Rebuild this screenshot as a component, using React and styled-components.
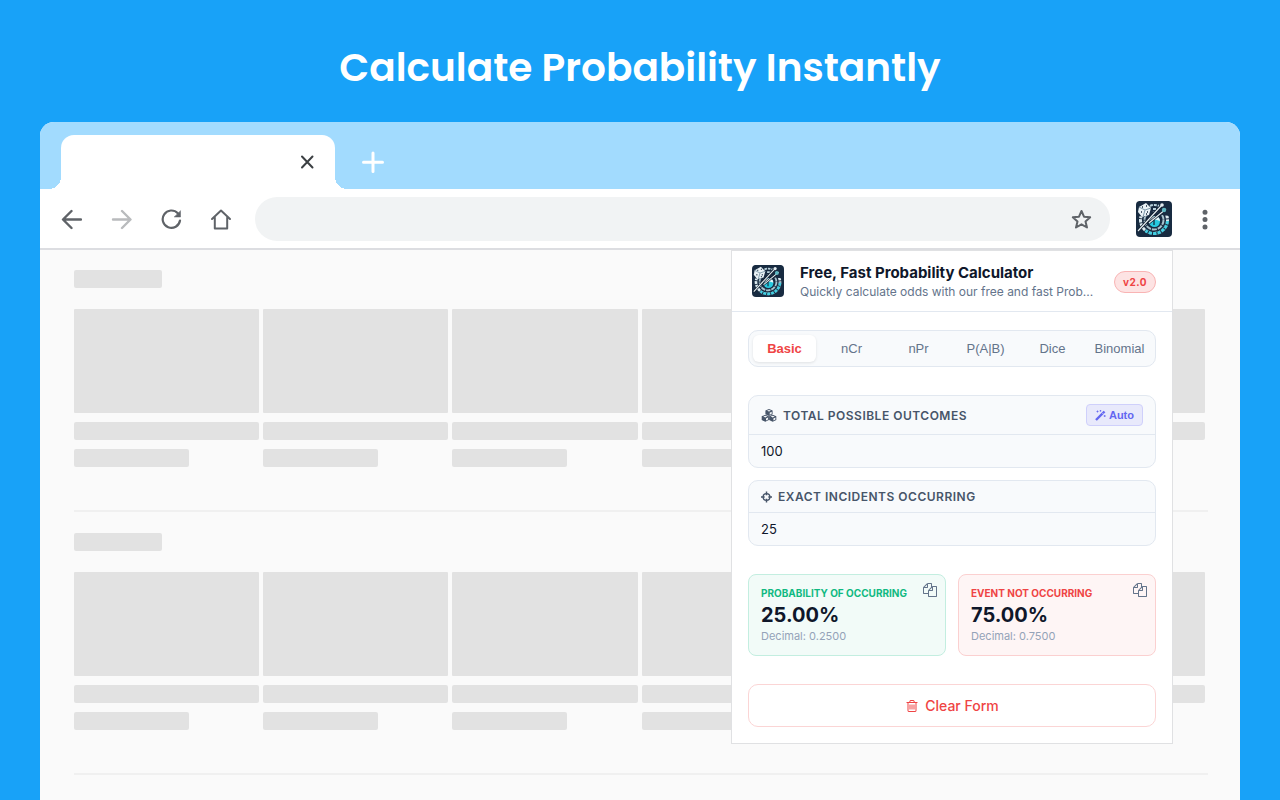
import React, { useState } from 'react'
import styled, { createGlobalStyle } from 'styled-components'

const GlobalStyle = createGlobalStyle`
    * {
        box-sizing: border-box;
    }

    body {
        margin: 0;
        background: #18a2f8;
        font-family: Inter, sans-serif;
    }

    button, input {
        font-family: inherit;
        margin: 0;
    }
`;

const tabs = ['Basic', 'nCr', 'nPr', 'P(A|B)', 'Dice', 'Binomial'];

const cards = [1, 2, 3, 4, 5, 6];

function Logo({ size }) {
    return (
        <LogoSvg width={size} height={size} viewBox="0 0 36 36" aria-hidden="true">
            <rect width="36" height="36" fill="#182b41" />
            <circle cx="18" cy="19" r="13.500" fill="none" stroke="#dbeaf0" strokeWidth="3" strokeDasharray="3.4 1" />
            <path d="M31.500 20a13.500 13.500 0 0 1-22 9.500" fill="none" stroke="#182b41" strokeWidth="3" />
            <path d="M31.500 20a13.500 13.500 0 0 1-22 9.500" fill="none" stroke="#45cfe2" strokeWidth="3" strokeDasharray="3.4 1" />
            <circle cx="18" cy="19" r="9.500" fill="none" stroke="#a9c3cd" strokeWidth="2" strokeDasharray="5 1" />
            <path d="M3 0h30v15L27 14 18 10 8 16 3 15z" fill="#182b41" />
            <path d="M14 5q4-2 9 0M17 8h5" fill="none" stroke="#b9d2dc" strokeWidth="2" strokeDasharray="3 1" />
            <circle cx="18.500" cy="20.500" r="5.500" fill="#28c9df" />
            <path d="M13 20q2-5 7-5 4 1 4 5-6-3-11 0z" fill="#e8f8fb" />
            <path d="M18 19v5" stroke="#15384d" strokeWidth="1.400" />
            <path d="M2 30L26 4M13 22L30 8" stroke="#101e2e" strokeWidth="2.600" />
            <path d="M2 30L26 4M13 22L30 8" stroke="#e4edf1" strokeWidth="1.200" />
            <circle cx="26" cy="4" r="1.800" fill="#e4edf1" />
            <circle cx="28" cy="9" r="2.200" fill="#5fb9c3" />
            <path d="M3 6l7-4 5 5-2 7-7 2-4-5z" fill="#e9f2f6" />
            <path d="M3 6l6 3 6-2M9 9l-2 7" fill="none" stroke="#7d99aa" />
            <path d="M6 6h1M10 5h1M5 11h1M11 11h1M10 13h1" stroke="#182b41" strokeWidth="1.500" />
        </LogoSvg>
    )
}

function LineIcon({ size = 22, width = 2, children }) {
    return (
        <svg width={size} height={size} viewBox={`0 0 ${size} ${size}`} fill="none" stroke="currentColor" strokeWidth={width} strokeLinejoin="round" strokeLinecap="round" aria-hidden="true">
            {children}
        </svg>
    )
}

function CubesIcon() {
    return (
        <svg width="16" height="13" viewBox="0 0 16 13" aria-hidden="true">
            {[[8, 0], [4.3, 5.8], [11.7, 5.8]].map(([x, y]) => (
                <g key={x} transform={`translate(${x} ${y})`}>
                    <path d="M0 0l3.600 1.500v3.700L0 7l-3.600-1.800V1.500z" fill="currentColor" />
                    <path d="M-2 1.800L0 1l2 .8-2 .8zM.700 3.700l2-.9v1.900l-2 1z" fill="#f8fafc" />
                </g>
            ))}
        </svg>
    )
}

function CrosshairIcon() {
    return (
        <svg width="11" height="12" viewBox="0 0 12 12" fill="none" stroke="currentColor" aria-hidden="true">
            <circle cx="6" cy="6" r="3.700" strokeWidth="1.500" />
            <path d="M6 0v4M6 8v4M0 6h4M8 6h4" strokeWidth="1.600" />
        </svg>
    )
}

function WandIcon() {
    return (
        <svg width="11" height="11" viewBox="0 0 11 11" fill="none" stroke="currentColor" aria-hidden="true">
            <path d="M1 10L9.500 1.500" strokeWidth="2.400" />
            <path d="M7 2.700l1.300 1.300" stroke="#e8e9fb" strokeWidth=".7" />
            <path d="M2.500 .5v2M1.500 1.500h2M5.500 0v1.600M4.700 .8h1.600M9.700 5v2M8.700 6h2" strokeWidth=".8" />
        </svg>
    )
}

function CopyIcon() {
    return (
        <svg width="14" height="14" viewBox="0 0 1792 1792" fill="currentColor" aria-hidden="true">
            <path d="M1696 384q40 0 68 28t28 68v1216q0 40-28 68t-68 28h-960q-40 0-68-28t-28-68v-288h-544q-40 0-68-28t-28-68v-672q0-40 20-88t48-76l408-408q28-28 76-48t88-20h416q40 0 68 28t28 68v328q68-40 128-40h416zm-544 213l-299 299h299v-299zm-640-384l-299 299h299v-299zm196 647l316-316v-416h-384v416q0 40-28 68t-68 28h-416v640h512v-256q0-40 20-88t48-76zm956 804v-1152h-384v416q0 40-28 68t-68 28h-416v640h896z" />
        </svg>
    )
}

function TrashIcon() {
    return (
        <svg width="14" height="14" viewBox="0 0 1792 1792" fill="currentColor" aria-hidden="true">
            <path d="M704 736v576q0 14-9 23t-23 9h-64q-14 0-23-9t-9-23v-576q0-14 9-23t23-9h64q14 0 23 9t9 23zm256 0v576q0 14-9 23t-23 9h-64q-14 0-23-9t-9-23v-576q0-14 9-23t23-9h64q14 0 23 9t9 23zm256 0v576q0 14-9 23t-23 9h-64q-14 0-23-9t-9-23v-576q0-14 9-23t23-9h64q14 0 23 9t9 23zm128 724v-948h-896v948q0 22 7 40.500t14.500 27 10.500 8.500h832q3 0 10.500-8.500t14.500-27 7-40.500zm-672-1076h448l-48-117q-7-9-17-11h-317q-10 2-17 11zm928 32v64q0 14-9 23t-23 9h-96v948q0 83-47 143.500t-113 60.500h-832q-66 0-113-58.500t-47-141.500v-952h-96q-14 0-23-9t-9-23v-64q0-14 9-23t23-9h309l70-167q15-37 54-63t79-26h320q40 0 79 26t54 63l70 167h309q14 0 23 9t9 23z" />
        </svg>
    )
}

function SkeletonSection() {
    return (
        <Section>
            <Bar $width="88px" />
            <CardGrid>
                {cards.map((card) => (
                    <Card key={card}>
                        <Thumb />
                        <Bar $width="100%" />
                        <Bar $width="62%" />
                    </Card>
                ))}
            </CardGrid>
        </Section>
    )
}

function Popup() {
    const [active, setActive] = useState('Basic');
    const [total, setTotal] = useState('100');
    const [exact, setExact] = useState('25');

    const ratio = Number(total) > 0 ? Number(exact) / Number(total) : 0;

    const handleClear = () => {
        setTotal('');
        setExact('');
    }

    return (
        <PopupBox>
            <PopupHeader>
                <Logo size={32} />
                <Heading>
                    <h2>Free, Fast Probability Calculator</h2>
                    <p>Quickly calculate odds with our free and fast Prob...</p>
                </Heading>
                <Version>v2.0</Version>
            </PopupHeader>

            <PopupBody>
                <Tabs>
                    {tabs.map((tab) => (
                        <TabButton key={tab} type="button" $active={tab === active} onClick={() => setActive(tab)}>{tab}</TabButton>
                    ))}
                </Tabs>

                <Fields>
                    <Field>
                        <FieldHead $tall>
                            <label htmlFor="total"><CubesIcon />Total possible outcomes</label>
                            <AutoButton type="button"><WandIcon />Auto</AutoButton>
                        </FieldHead>
                        <input id="total" type="text" value={total} onChange={(e) => setTotal(e.target.value)} />
                    </Field>
                    <Field>
                        <FieldHead>
                            <label htmlFor="exact"><CrosshairIcon />Exact incidents occurring</label>
                        </FieldHead>
                        <input id="exact" type="text" value={exact} onChange={(e) => setExact(e.target.value)} />
                    </Field>
                </Fields>

                <Results>
                    <Result $color="#10b981" $bg="#f2fbf8" $border="#c3eee0">
                        <h3>PROBABILITY OF OCCURRING</h3>
                        <strong>{(ratio * 100).toFixed(2)}%</strong>
                        <small>Decimal: {ratio.toFixed(4)}</small>
                        <CopyButton type="button" aria-label="Copy"><CopyIcon /></CopyButton>
                    </Result>
                    <Result $color="#ef4444" $bg="#fef5f5" $border="#fbd0d0">
                        <h3>EVENT NOT OCCURRING</h3>
                        <strong>{((1 - ratio) * 100).toFixed(2)}%</strong>
                        <small>Decimal: {(1 - ratio).toFixed(4)}</small>
                        <CopyButton type="button" aria-label="Copy"><CopyIcon /></CopyButton>
                    </Result>
                </Results>

                <ClearButton type="button" onClick={handleClear}><TrashIcon />Clear Form</ClearButton>
            </PopupBody>
        </PopupBox>
    )
}

export default function App() {
    return (
        <Page>
            <GlobalStyle />
            <Title>Calculate Probability Instantly</Title>
            <Browser>
                <TabStrip>
                    <BrowserTab>
                        <IconButton type="button" aria-label="Close tab" $color="#3c4043">
                            <LineIcon size={20}><path d="M5 4.500l10.500 11M15.500 4.500L5 15.500" /></LineIcon>
                        </IconButton>
                    </BrowserTab>
                    <IconButton type="button" aria-label="New tab" $color="#fff">
                        <LineIcon size={32} width={3}><path d="M16 7v18.500M6.500 16.200h19" /></LineIcon>
                    </IconButton>
                </TabStrip>
                <Toolbar>
                    <NavButtons>
                        <IconButton type="button" aria-label="Back">
                            <LineIcon><path d="M21 11.500H3.500M11.500 3L3 11.500l8.500 8.500" strokeWidth="2.400" /></LineIcon>
                        </IconButton>
                        <IconButton type="button" aria-label="Forward" $color="#b9bbbd">
                            <LineIcon><path d="M3 11.500h17M12 3l8.500 8.500L12 20" strokeWidth="2.400" /></LineIcon>
                        </IconButton>
                        <IconButton type="button" aria-label="Reload">
                            <LineIcon>
                                <path d="M20 12.500A8.700 8.700 0 1 1 17.800 5.300" strokeWidth="2.200" />
                                <path d="M20.500 3v6h-6z" fill="currentColor" strokeWidth=".5" />
                            </LineIcon>
                        </IconButton>
                        <IconButton type="button" aria-label="Home">
                            <LineIcon><path d="M2 11L11 2.500l9 8.500M4.800 9.500v11h12.400v-11" /></LineIcon>
                        </IconButton>
                    </NavButtons>
                    <AddressBar>
                        <input type="text" aria-label="Address" />
                        <IconButton type="button" aria-label="Bookmark">
                            <LineIcon><path d="M11.500 3l2.500 5.700 6.200.5-4.700 4.200 1.500 6.100-5.500-3.200L6 19.500l1.500-6.100-4.700-4.200 6.200-.5z" /></LineIcon>
                        </IconButton>
                    </AddressBar>
                    <IconButton type="button" aria-label="Probability Calculator"><Logo size={36} /></IconButton>
                    <IconButton type="button" aria-label="Menu">
                        <LineIcon size={30} width={5}><path d="M15 8.300h.01M15 15.500h.01M15 23h.01" /></LineIcon>
                    </IconButton>
                </Toolbar>
                <Content>
                    <SkeletonSection />
                    <SkeletonSection />
                    <Popup />
                </Content>
            </Browser>
        </Page>
    )
}


const Page = styled.div`
    height: 100vh;
    overflow: hidden;
    display: flex;
    flex-direction: column;
    padding: 0 40px;
`;

const LogoSvg = styled.svg`
    flex-shrink: 0;
    border-radius: 4px;
`;

const Title = styled.h1`
    margin: 0;
    padding: 38px 0 24px;
    color: #fff;
    font-family: Poppins, Inter, sans-serif;
    font-size: 39px;
    line-height: 60px;
    font-weight: 600;
    text-align: center;
`;

const Browser = styled.main`
    flex: 1;
    min-height: 0;
    display: flex;
    flex-direction: column;
    border-radius: 14px 14px 0 0;
    overflow: hidden;
    background: #fafafa;
`;

const TabStrip = styled.div`
    height: 67px;
    flex-shrink: 0;
    display: flex;
    align-items: center;
    gap: 22px;
    padding: 13px 21px 0;
    background: #a2dbfe;
`;

const BrowserTab = styled.div`
    position: relative;
    width: 274px;
    height: 54px;
    display: flex;
    align-items: center;
    justify-content: flex-end;
    padding-right: 18px;
    border-radius: 13px 13px 0 0;
    background: #fff;

    &::before, &::after {
        content: '';
        position: absolute;
        bottom: 0;
        width: 12px;
        height: 12px;
    }

    &::before {
        right: 100%;
        background: radial-gradient(circle at 0 0, transparent 12px, #fff 12px);
    }

    &::after {
        left: 100%;
        background: radial-gradient(circle at 100% 0, transparent 12px, #fff 12px);
    }
`;

const IconButton = styled.button`
    display: flex;
    padding: 0;
    border: 0;
    background: none;
    color: ${({ $color }) => $color || '#5f6368'};
`;

const Toolbar = styled.div`
    height: 61px;
    flex-shrink: 0;
    display: flex;
    align-items: center;
    padding: 1px 20px 0 17px;
    border-bottom: 2px solid #dcdde1;
    background: #fff;

    & > button:last-child {
        margin-left: 18px;
    }
`;

const NavButtons = styled.div`
    display: flex;
    align-items: center;
    gap: 22px;
    margin-right: 20px;

    button {
        width: 28px;
        justify-content: center;
    }
`;

const AddressBar = styled.div`
    flex: 1;
    height: 44px;
    display: flex;
    align-items: center;
    margin-right: 26px;
    padding: 0 18px 0 20px;
    border-radius: 22px;
    background: #f1f3f4;

    input {
        flex: 1;
        border: 0;
        outline: 0;
        background: none;
    }
`;

const Content = styled.div`
    position: relative;
    flex: 1;
    padding: 0 32px 0 34px;
`;

const Section = styled.section`
    padding: 20px 3px 43px 0;
    border-bottom: 2px solid #f0f0f0;

    & + & {
        padding-top: 21px;
    }
`;

const Bar = styled.div`
    width: ${({ $width }) => $width};
    height: 18px;
    border-radius: 2px;
    background: #e2e2e2;
`;

const CardGrid = styled.div`
    display: grid;
    grid-template-columns: repeat(6, 1fr);
    gap: 4px;
    margin-top: 21px;
`;

const Card = styled.div`
    display: flex;
    flex-direction: column;
    gap: 9px;
`;

const Thumb = styled.div`
    height: 104px;
    border-radius: 1px;
    background: #e2e2e2;
`;

/* drops down from the toolbar, over the page */
const PopupBox = styled.section`
    position: absolute;
    top: 0;
    right: 67px;
    width: 442px;
    border: 1px solid #e0e1e3;
    background: #fff;
`;

const PopupHeader = styled.header`
    height: 61px;
    display: flex;
    align-items: center;
    padding: 0 16px 0 20px;
    border-bottom: 1px solid #e2e8f0;
`;

const Heading = styled.div`
    flex: 1;
    min-width: 0;
    margin: 0 16px;
    padding-top: 2px;

    h2 {
        margin: 0;
        color: #0f172a;
        font-size: 15px;
        line-height: 20px;
        font-weight: 700;
    }

    p {
        margin: 0;
        overflow: hidden;
        color: #64748b;
        font-size: 12px;
        line-height: 18px;
        white-space: nowrap;
        text-overflow: ellipsis;
    }
`;

const Version = styled.span`
    margin-top: 1px;
    padding: 0 8px;
    border: 1px solid #f9b4b4;
    border-radius: 11px;
    background: #fde3e3;
    color: #ef4444;
    font-size: 10px;
    line-height: 20px;
    font-weight: 700;
    letter-spacing: 0.5px;
`;

const PopupBody = styled.div`
    display: flex;
    flex-direction: column;
    gap: 28px;
    padding: 18px 16px 16px;
`;

const Tabs = styled.nav`
    display: grid;
    grid-template-columns: repeat(6, 1fr);
    gap: 4px;
    padding: 4px;
    border: 1px solid #e2e8f0;
    border-radius: 10px;
    background: #f8fafc;
`;

const TabButton = styled.button`
    height: 27px;
    padding: 0;
    border: 0;
    border-radius: 6px;
    background: ${({ $active }) => $active ? '#fff' : 'transparent'};
    box-shadow: ${({ $active }) => $active ? '0 1px 3px rgba(0, 0, 0, 0.1)' : 'none'};
    color: ${({ $active }) => $active ? '#ef4444' : '#64748b'};
    font-family: Arial, "Liberation Sans", sans-serif;
    font-size: 13px;
    font-weight: ${({ $active }) => $active ? 600 : 400};
`;

const Fields = styled.div`
    display: flex;
    flex-direction: column;
    gap: 12px;
`;

const Field = styled.div`
    overflow: hidden;
    border: 1px solid #e2e8f0;
    border-radius: 10px;
    background: #f8fafc;

    input {
        display: block;
        width: 100%;
        height: 32px;
        padding: 0 12px;
        border: 0;
        outline: 0;
        background: none;
        color: #0f172a;
        font-size: 13px;
    }
`;

const FieldHead = styled.div`
    height: ${({ $tall }) => $tall ? '39px' : '32px'};
    display: flex;
    align-items: center;
    justify-content: space-between;
    padding: 0 12px;
    border-bottom: 1px solid #e2e8f0;

    label {
        display: flex;
        align-items: center;
        gap: 6px;
        color: #475569;
        font-size: 12px;
        font-weight: 600;
        letter-spacing: 0.5px;
        text-transform: uppercase;
    }
`;

const AutoButton = styled.button`
    height: 22px;
    display: flex;
    align-items: center;
    gap: 3px;
    padding: 0 8px;
    border: 1px solid #cfd0fb;
    border-radius: 4px;
    background: #e8e9fb;
    color: #6366f1;
    font-family: Arial, "Liberation Sans", sans-serif;
    font-size: 11px;
    font-weight: 600;
`;

const Results = styled.div`
    display: grid;
    grid-template-columns: 1fr 1fr;
    gap: 12px;
`;

const Result = styled.article`
    position: relative;
    height: 82px;
    padding: 12px;
    border: 1px solid ${({ $border }) => $border};
    border-radius: 8px;
    background: ${({ $bg }) => $bg};

    h3 {
        margin: 0;
        color: ${({ $color }) => $color};
        font-size: 10px;
        line-height: 12px;
        font-weight: 700;
    }

    strong {
        display: block;
        color: #0f172a;
        font-size: 20px;
        line-height: 32px;
        font-weight: 700;
    }

    small {
        display: block;
        color: #94a3b8;
        font-size: 11px;
        line-height: 10px;
    }
`;

const CopyButton = styled.button`
    position: absolute;
    top: 8px;
    right: 8px;
    display: flex;
    padding: 0;
    border: 0;
    background: none;
    color: #64748b;
`;

const ClearButton = styled.button`
    height: 43px;
    display: flex;
    align-items: center;
    justify-content: center;
    gap: 6px;
    border: 1px solid #fbd5d5;
    border-radius: 10px;
    background: #fff;
    color: #ef4444;
    font-size: 14px;
    font-weight: 500;
`;
